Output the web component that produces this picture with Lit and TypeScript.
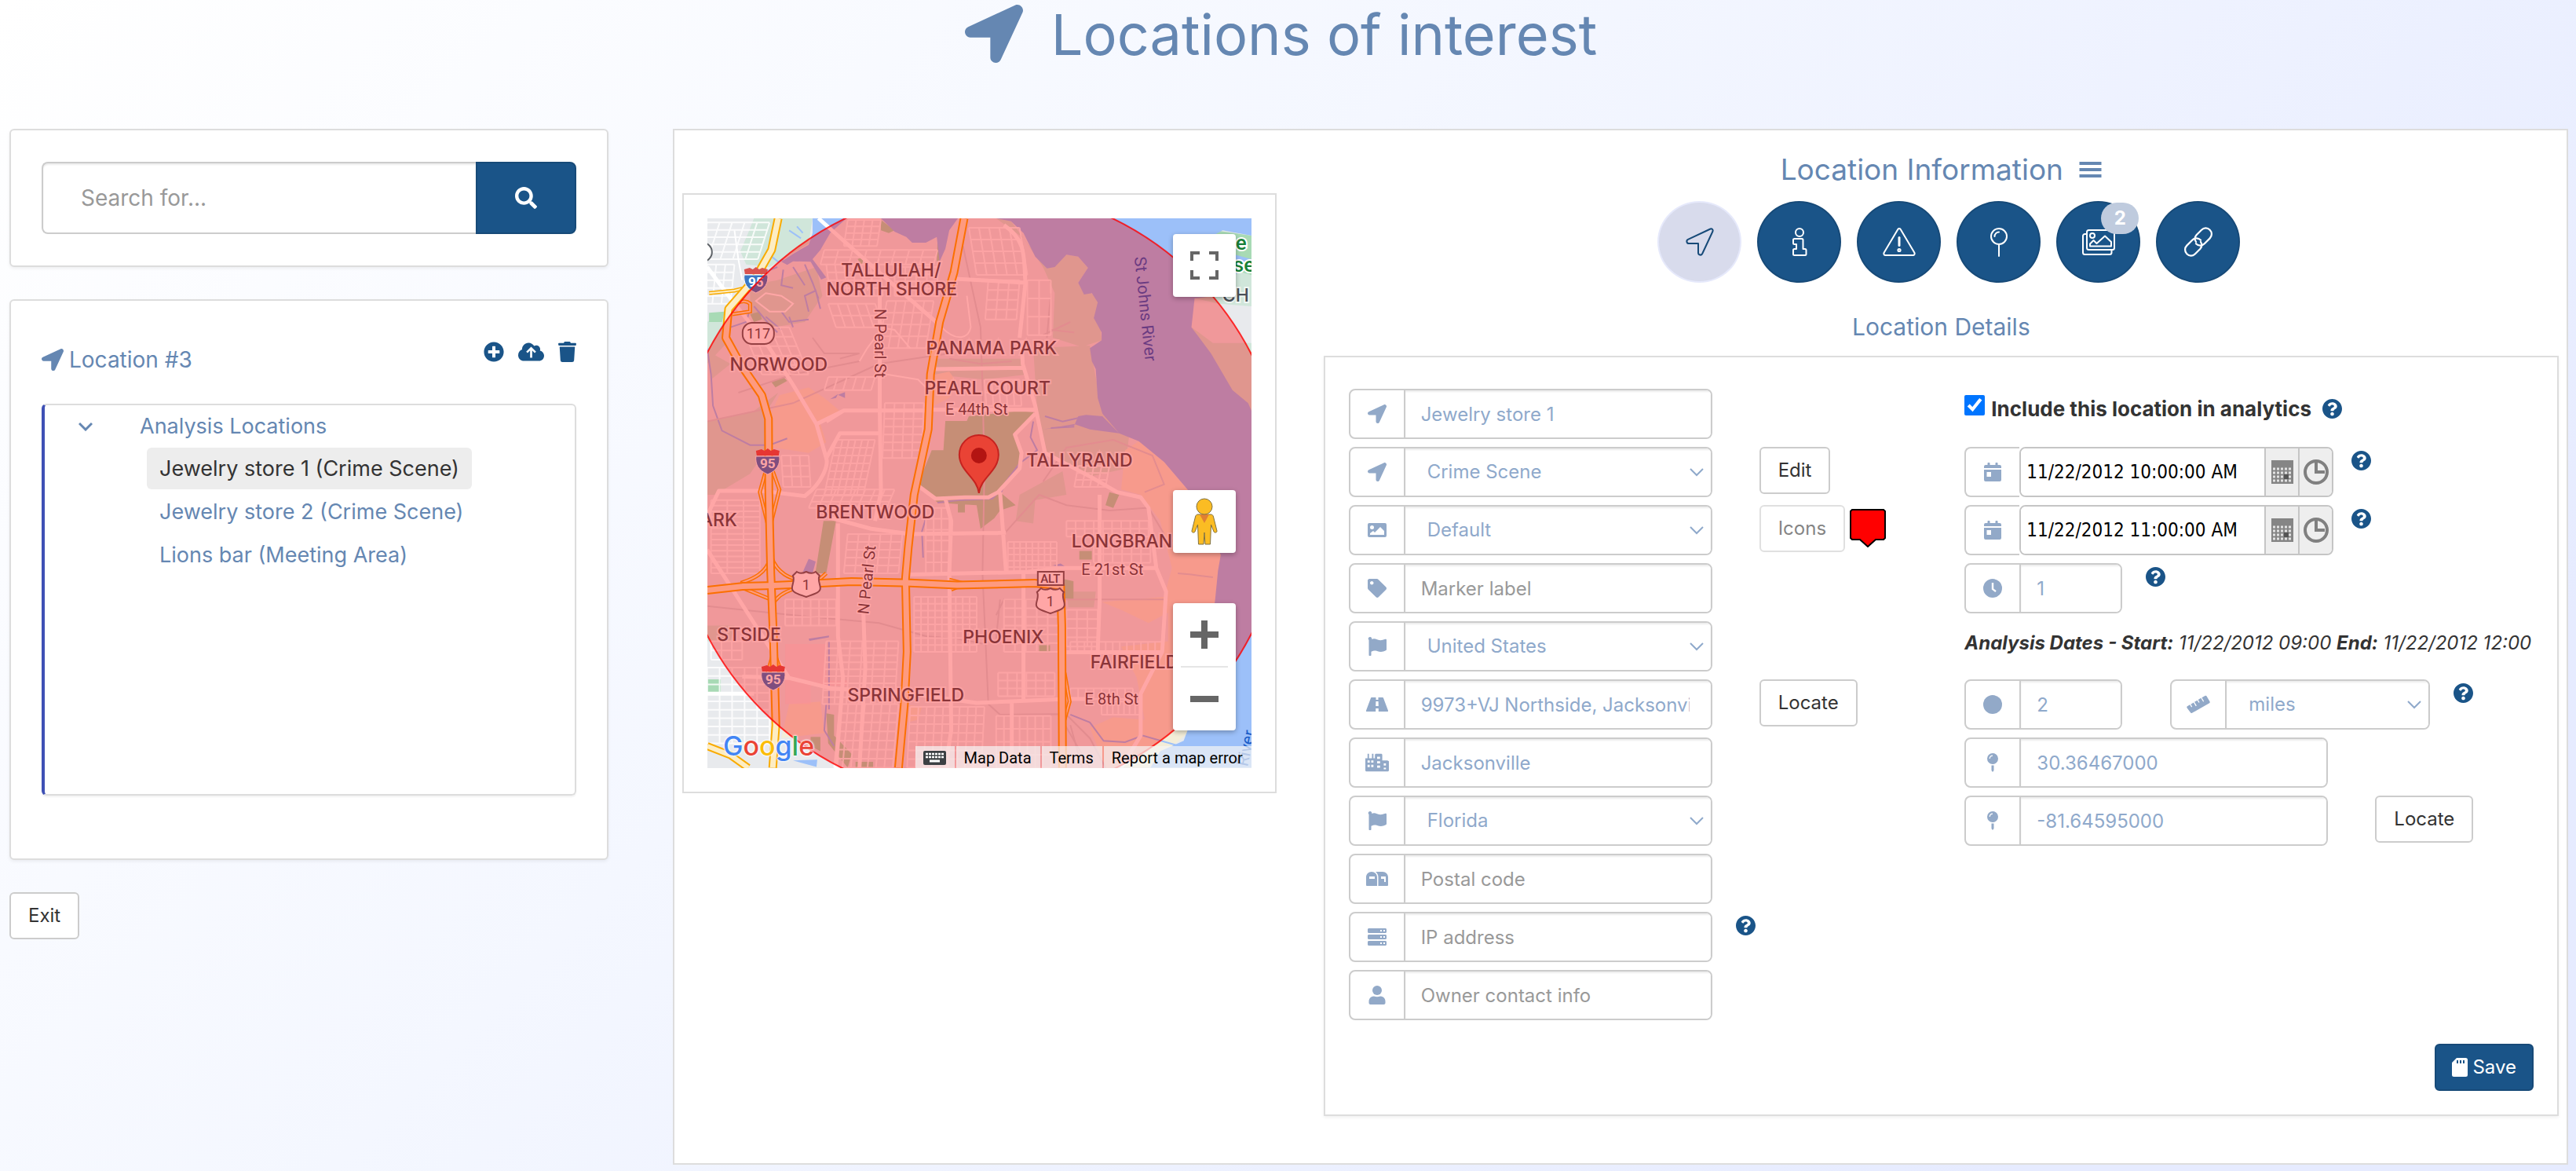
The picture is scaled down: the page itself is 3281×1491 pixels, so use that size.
import { LitElement, html, svg, css, nothing } from "lit";
import { customElement, property } from "lit/decorators.js";

/* ---------- icons ---------- */

const ARROW =
  "M444.52 3.52L28.74 195.42c-47.97 22.39-31.98 92.75 19.19 92.75h175.91v175.91c0 51.17 70.36 67.17 92.75 19.19l191.9-415.78c15.99-38.39-25.59-79.97-63.97-63.97z";

const icons: Record<string, { box: string; art: unknown }> = {
  arrow: { box: "0 0 512 512", art: svg`<path d=${ARROW} />` },
  search: {
    box: "0 0 512 512",
    art: svg`<path d="M505 442.7L405.3 343c-4.5-4.5-10.6-7-17-7H372c27.6-35.3 44-79.7 44-128C416 93.1 322.9 0 208 0S0 93.1 0 208s93.1 208 208 208c48.3 0 92.7-16.4 128-44v16.3c0 6.4 2.5 12.5 7 17l99.7 99.7c9.4 9.4 24.6 9.4 33.9 0l28.3-28.3c9.4-9.4 9.4-24.6.1-34zM208 336c-70.7 0-128-57.2-128-128 0-70.7 57.2-128 128-128 70.7 0 128 57.2 128 128 0 70.7-57.2 128-128 128z" />`,
  },
  plus: {
    box: "0 0 512 512",
    art: svg`<path d="M256 8C119 8 8 119 8 256s111 248 248 248 248-111 248-248S393 8 256 8zm144 276c0 6.600-5.400 12-12 12h-92v92c0 6.600-5.400 12-12 12h-56c-6.600 0-12-5.400-12-12v-92h-92c-6.600 0-12-5.400-12-12v-56c0-6.600 5.400-12 12-12h92v-92c0-6.600 5.400-12 12-12h56c6.600 0 12 5.400 12 12v92h92c6.600 0 12 5.400 12 12v56z" />`,
  },
  cloud: {
    box: "0 0 640 448",
    art: svg`<path fill-rule="evenodd" d="M537 195c5-11 7-23 7-35 0-53-43-96-96-96-20 0-38 6-53 16C367 32 315 0 256 0 168 0 96 72 96 160v8C40 188 0 241 0 304c0 79 65 144 144 144h368c71 0 128-57 128-128 0-62-44-114-103-125zM320 96L442 218 408 252 346 192V368H294V192L232 252 198 218Z" />`,
  },
  trash: {
    box: "0 0 448 512",
    art: svg`<path d="M432 32H312l-9.400-18.700A24 24 0 0 0 281 0H167a24 24 0 0 0-21.600 13.300L136 32H16A16 16 0 0 0 0 48v32a16 16 0 0 0 16 16h416a16 16 0 0 0 16-16V48a16 16 0 0 0-16-16zM53 467a48 48 0 0 0 48 45h246a48 48 0 0 0 48-45L416 128H32z" />`,
  },
  help: {
    box: "8 8 496 496",
    art: svg`<path d="M504 256c0 136.997-111.043 248-248 248S8 392.997 8 256C8 119.083 119.043 8 256 8s248 111.083 248 248zM262.655 90c-54.497 0-89.255 22.957-116.549 63.758-3.536 5.286-2.353 12.415 2.715 16.258l34.699 26.31c5.205 3.947 12.621 3.008 16.665-2.122 17.864-22.658 30.113-35.797 57.303-35.797 20.429 0 45.698 13.148 45.698 32.958 0 14.976-12.363 22.667-32.534 33.976C247.128 238.528 216 254.941 216 296v4c0 6.627 5.373 12 12 12h56c6.627 0 12-5.373 12-12v-1.333c0-28.462 83.186-29.647 83.186-106.667 0-58.002-60.165-102-116.531-102zM256 338c-25.365 0-46 20.635-46 46 0 25.364 20.635 46 46 46s46-20.636 46-46c0-25.365-20.635-46-46-46z" />`,
  },
  tag: {
    box: "0 0 512 512",
    art: svg`<path d="M0 252.118V48C0 21.490 21.490 0 48 0h204.118a48 48 0 0 1 33.941 14.059l211.882 211.882c18.745 18.745 18.745 49.137 0 67.882L293.823 497.941c-18.745 18.745-49.137 18.745-67.882 0L14.059 286.059A48 48 0 0 1 0 252.118zM112 64c-26.510 0-48 21.490-48 48s21.490 48 48 48 48-21.490 48-48-21.490-48-48-48z" />`,
  },
  image: {
    box: "0 0 24 24",
    art: svg`<path fill-rule="evenodd" d="M2 3h20a2 2 0 0 1 2 2v14a2 2 0 0 1-2 2H2a2 2 0 0 1-2-2V5a2 2 0 0 1 2-2zM5.500 6a2.500 2.500 0 1 0 0 5 2.500 2.500 0 0 0 0-5zM3 18h18v-5l-5-5-7 7-2-2-4 3z" />`,
  },
  flag: {
    box: "0 0 24 24",
    art: svg`<path d="M3 0a2.200 2.200 0 0 1 2.100 3C7 2.200 9 2 12 3.200c4 1.500 6 1.200 10.500-.4.800-.300 1.500.1 1.500 1v12c0 .8-.4 1.200-1 1.500-4 2-7 2-11 .700-2.500-.8-4.500-.6-7.500.7V23c0 .600-.4 1-1 1h-1c-.600 0-1-.4-1-1V3.900A2.200 2.200 0 0 1 3 0z" />`,
  },
  road: {
    box: "0 0 28 24",
    art: svg`<path fill-rule="evenodd" d="M7 3h5.500v3h3V3H21a1 1 0 0 1 1 .7l6 16c.3.700-.2 1.300-1 1.300H15.800v-4h-3.600v4H1c-.8 0-1.300-.600-1-1.300l6-16A1 1 0 0 1 7 3zM12.400 8l-.2 6h3.600l-.2-6z" />`,
  },
  city: {
    box: "0 0 32 24",
    art: svg`<path fill-rule="evenodd" d="M0 6h3V0h2v6h4V0h2v6h2V1l1-1h8l1 1v8h7l2 1v13l-1 1H1l-1-1zM3 9v3h3V9zm5 0v3h3V9zm8-5v3h4V4zm0 6v3h4v-3zM3 15v3h3v-3zm5 0v3h3v-3zm8 1v3h4v-3zm9-3v3h3v-3zm0 6v2h3v-2z" />`,
  },
  mailbox: {
    box: "0 0 28 24",
    art: svg`<path fill-rule="evenodd" d="M7 3c4 0 7 3 7 7v11H1a1 1 0 0 1-1-1V10c0-4 3-7 7-7zM4 9v3h7V9z" /><path fill-rule="evenodd" d="M12 3h9c4 0 7 3 7 7v10a1 1 0 0 1-1 1H15.500V10c0-3-1.500-5.500-3.500-7zM19 9v3h4v4h2V9z" />`,
  },
  server: {
    box: "0 0 24 24",
    art: svg`<path fill-rule="evenodd" d="M1.500 1h21c.800 0 1.500.7 1.500 1.500v3c0 .800-.7 1.500-1.500 1.500h-21C.7 7 0 6.300 0 5.500v-3C0 1.700.7 1 1.500 1zM16 3v2h2V3zm4 0v2h2V3zM1.500 9h21c.800 0 1.500.7 1.500 1.500v3c0 .800-.7 1.500-1.500 1.500h-21C.7 15 0 14.300 0 13.500v-3C0 9.700.7 9 1.500 9zM16 11v2h2v-2zm4 0v2h2v-2zM1.500 17h21c.800 0 1.500.7 1.500 1.500v3c0 .800-.7 1.500-1.500 1.500h-21C.7 23 0 22.300 0 21.500v-3c0-.8.7-1.500 1.500-1.500zM16 19v2h2v-2zm4 0v2h2v-2z" />`,
  },
  user: {
    box: "0 0 24 24",
    art: svg`<circle cx="12" cy="6" r="6" /><path d="M8 13.500c2.500 1 5.500 1 8 0 4 0 6.500 3 6.500 6.500v2c0 1-1 2-2 2h-17c-1 0-2-1-2-2v-2c0-3.500 2.500-6.500 6.500-6.500z" />`,
  },
  calendar: {
    box: "0 0 24 24",
    art: svg`<path fill-rule="evenodd" d="M1 7V5a2 2 0 0 1 2-2h2.500V1c0-.6.4-1 1-1h1c.6 0 1 .4 1 1v2h7V1c0-.6.4-1 1-1h1c.6 0 1 .4 1 1v2H21a2 2 0 0 1 2 2v2zM1 9h22v13a2 2 0 0 1-2 2H3a2 2 0 0 1-2-2zm3.500 3v6H10v-6z" />`,
  },
  clock: {
    box: "0 0 24 24",
    art: svg`<path fill-rule="evenodd" d="M12 0a12 12 0 1 1 0 24 12 12 0 0 1 0-24zM10.800 5v8.500l4.500 3.600 1.400-1.900-3.500-2.800V5z" />`,
  },
  circle: { box: "0 0 24 24", art: svg`<circle cx="12" cy="12" r="12" />` },
  ruler: {
    box: "0 0 32 24",
    art: svg`<path d="M1 14.500 4.500 12.300 6.500 15.700 7.700 15 5.700 11.600 9.500 9.300 12.500 14.300 13.700 13.600 10.700 8.600 14.500 6.300 16.500 9.700 17.700 9 15.700 5.600 19.500 3.300 22.500 8.300 23.700 7.600 20.700 2.600 25 .3c.9-.5 1.800-.3 2.300.5L31.500 8c.500.800.2 1.600-.5 2L7.500 23.500c-.8.500-1.700.3-2.200-.5L.500 16.500c-.4-.8-.2-1.500.5-2z" />`,
  },
  pin: {
    box: "0 0 24 24",
    art: svg`<path fill-rule="evenodd" d="M12 0a7 7 0 1 1 0 14 7 7 0 0 1 0-14zM12 2.500C9.500 2.500 7.600 4.400 7.600 6.900h1.200C8.800 5 10.200 3.700 12 3.700z" /><path d="M10.500 15.400h3V22L12 24l-1.500-2z" />`,
  },
  sd: {
    box: "0 0 20 24",
    art: svg`<path fill-rule="evenodd" d="M6 0h11.500A2.500 2.500 0 0 1 20 2.500v19a2.500 2.500 0 0 1-2.500 2.500h-15A2.500 2.500 0 0 1 0 21.500V6zM6 3v4h2V3zm4 0v4h2V3zm4 0v4h2V3z" />`,
  },
  bars: { box: "0 0 28 20", art: svg`<path d="M0 0h28v4H0zM0 8h28v4H0zM0 16h28v4H0z" />` },
};

const icon = (name: string, cls = "") =>
  svg`<svg class="icon ${cls}" viewBox=${icons[name].box} aria-hidden="true">${icons[name].art}</svg>`;

const outline: Record<string, unknown> = {
  arrow: svg`<path d="M31.500 1.500 3 14.800C.3 16.200 1.200 20 4.200 20H16v11.800c0 3 3.800 3.900 5.200 1.200L34.500 4.500c.8-2-1-3.800-3-3z" />`,
  info: svg`<circle cx="18" cy="6" r="5" /><path d="M11.500 14H21c1 0 1.500.500 1.500 1.500V27H25c1 0 1.500.5 1.500 1.500v5c0 1-.5 1.500-1.500 1.500H11.500c-1 0-1.500-.5-1.500-1.500v-5c0-1 .5-1.500 1.500-1.500H14v-6h-2.500c-1 0-1.500-.5-1.500-1.500v-4c0-1 .5-1.500 1.500-1.500z" />`,
  warning: svg`<path d="M16.300 2c.8-1.300 2.600-1.300 3.400 0l17.700 29.700c.8 1.500-.2 3.300-1.900 3.300H.5c-1.700 0-2.700-1.800-1.900-3.300z" /><path d="M18 12.500v10" stroke-width="3" /><circle cx="18" cy="28.500" r="1.600" />`,
  pin: svg`<circle cx="18" cy="11" r="10" /><path d="M18 21v15M12.500 11A5.500 5.500 0 0 1 18 5.500" />`,
  images: svg`<rect x="3" y="3" width="35" height="25" rx="2.500" /><path d="M2 8H1A2.500 2.500 0 0 0-2 10.500V31.500A2.500 2.500 0 0 0 .5 34H32a2.500 2.500 0 0 0 2.500-2.500V29" /><circle cx="10" cy="10" r="3" /><path d="M7 23.500v-3l4.500-4.500 4 4L26 10.500l8 7.500v5.500z" />`,
  link: svg`<g transform="translate(0 0) scale(1.5)" stroke-width="1.500"><path d="M10 13.500a5 5 0 0 0 7.200 0l4.600-4.600A5 5 0 0 0 14.700 1.800L10.500 6a5 5 0 0 0-.5 6M14 10.500a5 5 0 0 0-7.200 0l-4.600 4.600a5 5 0 0 0 7.100 7.100L13.500 18a5 5 0 0 0 .5-6" /></g>`,
};

/* ---------- map ---------- */

/* Block grid between two corners, sheared horizontally by \`lean\`. */
function blocks(x0: number, y0: number, x1: number, y1: number, nx: number, ny: number, lean = 0): string {
  let d = "";
  for (let i = 0; i <= nx; i++) {
    const x = x0 + ((x1 - x0) * i) / nx;
    d += `M${x} ${y0}L${x + lean} ${y1}`;
  }
  for (let j = 0; j <= ny; j++) {
    const t = j / ny;
    const y = y0 + (y1 - y0) * t;
    d += `M${x0 + lean * t} ${y}H${x1 + lean * t}`;
  }
  return d;
}

const streets = [
  blocks(440, 150, 525, 250, 4, 4, -10),
  blocks(380, 265, 670, 320, 8, 2, -10),
  blocks(385, 320, 520, 440, 6, 4, 10),
  blocks(560, 330, 670, 440, 4, 4),
  blocks(750, 180, 880, 360, 5, 4, 20),
  blocks(800, 380, 880, 530, 3, 4, -8),
  blocks(900, 380, 960, 590, 2, 3),
  blocks(540, 460, 660, 640, 5, 4, -20),
  blocks(170, 560, 290, 740, 5, 5, 50),
  blocks(390, 470, 510, 560, 5, 2, 20),
  blocks(390, 750, 510, 800, 5, 1, -10),
  blocks(535, 850, 635, 1060, 4, 7, -6),
  blocks(790, 760, 880, 860, 5, 2, 5),
  blocks(410, 990, 510, 1200, 6, 7, -30),
  blocks(270, 1050, 340, 1170, 3, 3, 5),
  blocks(1030, 1090, 1110, 1170, 4, 3, -10),
  blocks(90, 1220, 215, 1500, 3, 13),
  blocks(360, 1180, 560, 1250, 8, 3, -20),
  blocks(440, 1350, 580, 1500, 5, 5, -10),
  blocks(280, 1600, 410, 1700, 6, 3),
  blocks(610, 1590, 770, 1800, 9, 8),
  blocks(640, 1250, 700, 1500, 3, 6),
  blocks(850, 1380, 975, 1500, 8, 5),
  blocks(1000, 1300, 1210, 1360, 9, 2),
  blocks(1070, 1360, 1215, 1460, 6, 3),
  blocks(840, 1600, 980, 1800, 5, 6),
  blocks(1000, 1640, 1080, 1780, 3, 4),
  blocks(1010, 1762, 1245, 1800, 13, 1),
  blocks(1010, 1940, 1170, 1980, 8, 1),
  blocks(385, 1760, 570, 2000, 6, 9, -10),
  blocks(420, 2000, 570, 2243, 7, 7, -15),
  blocks(600, 2010, 790, 2243, 9, 7, -8),
  blocks(820, 2045, 960, 2243, 7, 4),
  blocks(825, 1880, 970, 1970, 6, 3),
  blocks(90, 1760, 170, 1830, 3, 2),
  blocks(1090, 1990, 1190, 2040, 7, 1),
  blocks(80, 1860, 240, 2150, 5, 9),
  blocks(80, 160, 240, 300, 5, 5, -30),
  blocks(80, 320, 150, 470, 3, 5, -10),
].join("");

const arterials =
  "M365 144L520 350 670 545M522 440V870L525 1190 510 1300M80 1280L110 1185H220L330 1205C380 1150 390 1080 385 1060L420 965H520M80 330L140 450 240 640 300 780 360 930 385 1060M360 930L430 878H640M430 878L385 920M650 875H920M660 720L890 715M885 610L888 700 920 860 945 1040 1060 1130 1130 1190 1190 1210 1210 1250 1230 1480 1255 1570 1245 1800 1190 1960 1190 2120 1140 2243M715 375L895 390 880 600M840 170C900 230 890 300 895 390M920 890L868 970 885 1040 880 1100 825 1190 800 1210H740L665 1215 615 1160M400 1290L500 1330 600 1350 845 1345M690 1215L705 1300 700 1500 705 2100 690 2243M830 1190L845 1490M600 1505L900 1495 980 1480 1230 1480M415 1310V1740L428 1900 410 2243M480 1650L485 1860 470 2243M80 1410L200 1690 290 1900 400 1940 600 1960 770 1995 1000 1980H1060M170 1895L290 1900M1000 1802H1245M1085 1200V1600L1080 1800M80 1960H200M890 1500V1980M860 1990V2243";

const highways = [
  "M262 144L245 265 205 370 135 490 128 600 165 700 220 820 237 910 238 1190 243 1500 250 1750 256 2080 248 2243",
  "M738 144L712 350 675 540 652 740 646 950 610 1200 595 1400 588 1520 592 1800 585 2000 570 2243",
  "M80 1565L170 1550 250 1547 450 1532 600 1537 720 1545 920 1538 985 1548 988 1700 990 2243",
];

const ramps =
  "M230 1110L215 1190 238 1330M248 1110L265 1180 245 1300M243 1440C230 1500 200 1520 170 1535V1555L243 1600M245 1440C260 1500 290 1520 330 1532M330 1550C290 1560 260 1580 248 1620M128 540C140 460 175 450 190 470V500L145 510M85 430L150 420 205 400M370 1520L385 1500M700 1525L740 1540 705 1562M925 1530L985 1500M985 1540L960 1560M995 1880L1008 1990 995 2060M250 1800L235 1880M252 1800L270 1880";

const labels: Array<[string, number, number, string]> = [
  ["TALLULAH/", 234, 74, "middle"],
  ["NORTH SHORE", 235, 98, "middle"],
  ["NORWOOD", 91, 194, "middle"],
  ["PANAMA PARK", 362, 173, "middle"],
  ["PEARL COURT", 357, 224, "middle"],
  ["TALLYRAND", 474, 316, "middle"],
  ["BRENTWOOD", 214, 382, "middle"],
  ["ARK", 38, 392, "end"],
  ["LONGBRANCH", 464, 419, "start"],
  ["STSIDE", 94, 538, "end"],
  ["PHOENIX", 377, 541, "middle"],
  ["FAIRFIELD", 488, 573, "start"],
  ["SPRINGFIELD", 253, 615, "middle"],
];

const roadNames: Array<[string, number, number, number]> = [
  ["E 44th St", 343, 250, 0],
  ["E 21st St", 516, 454, 0],
  ["E 8th St", 515, 619, 0],
  ["N Pearl St", 213, 159, 90],
  ["N Pearl St", 210, 461, -84],
];

const interstate = (x: number, y: number) => svg`
  <g transform="translate(${x} ${y})">
    <path d="M-15 -6H15C16 4 12 12 0 17-12 12-16 4-15-6z" fill="#3b78c3" stroke="#fff" />
    <path d="M-14 -7L-15-13-8-15-4-13 0-16 4-13 8-15 15-13 14-7z" fill="#d9534f" />
    <text class="shield" y="9" fill="#fff">95</text>
  </g>`;

const usRoute = (x: number, y: number) => svg`
  <g transform="translate(${x} ${y})">
    <path d="M-12-16C-8-13-4-14 0-16 4-14 8-13 12-16L17-11C14-6 18 0 18 5 18 11 8 13 0 16-8 13-18 11-18 5-18 0-14-6-17-11z" fill="#fff" stroke="#5f6368" stroke-width="2" />
    <text class="shield plain" y="7">1</text>
  </g>`;

@customElement("location-map")
export class LocationMap extends LitElement {
  static styles = css`
    :host {
      display: block;
      position: relative;
      height: 700px;
      overflow: hidden;
      font-family: Roboto, "Liberation Sans", sans-serif;
    }
    .canvas {
      display: block;
      width: 100%;
      height: 100%;
    }
    .terrain path {
      vector-effect: non-scaling-stroke;
    }
    .area {
      font-family: Inter, Roboto, sans-serif;
      font-size: 23px;
      font-weight: 500;
      fill: #4a5057;
      stroke: #ffffff;
      stroke-width: 4px;
      stroke-opacity: 0.7;
      paint-order: stroke;
    }
    .road {
      font-size: 20px;
      fill: #4a5057;
      stroke: #ffffff;
      stroke-width: 3px;
      paint-order: stroke;
      text-anchor: middle;
    }
    .river {
      font-size: 21px;
      fill: #1a5cc8;
      text-anchor: middle;
    }
    .park {
      font-size: 26px;
      font-weight: 500;
      fill: #188038;
      stroke: #ffffff;
      stroke-width: 4px;
      paint-order: stroke;
    }
    .shield {
      font-size: 17px;
      font-weight: 700;
      text-anchor: middle;
    }
    .plain {
      font-size: 18px;
      font-weight: 400;
      fill: #4a5057;
    }
    .plate {
      font-size: 15px;
      font-weight: 500;
    }
    .control {
      position: absolute;
      right: 20px;
      width: 80px;
      height: 80px;
      padding: 0;
      border: 0;
      border-radius: 4px;
      background: #ffffff;
      box-shadow: 0 2px 6px rgba(0, 0, 0, 0.3);
      display: grid;
      place-items: center;
    }
    .full {
      top: 20px;
    }
    .street {
      top: 346px;
    }
    .zoom {
      top: 490px;
      height: 162px;
      grid-template-rows: 1fr 2px 1fr;
    }
    .zoom button {
      border: 0;
      padding: 0;
      width: 80px;
      height: 80px;
      background: none;
      display: grid;
      place-items: center;
    }
    .rule {
      width: 60px;
      height: 2px;
      background: #e6e6e6;
    }
    .logo {
      position: absolute;
      left: 20px;
      bottom: 8px;
      font: 500 34px/40px Inter, sans-serif;
      text-decoration: none;
      text-shadow: 0 0 3px #ffffff, 0 0 3px #ffffff, 0 0 2px #ffffff;
    }
    .b {
      color: #4285f4;
    }
    .r {
      color: #ea4335;
    }
    .y {
      color: #fbbc05;
    }
    .g {
      color: #34a853;
    }
    .legal {
      position: absolute;
      right: 0;
      bottom: 0;
      display: flex;
      gap: 2px;
      height: 28px;
    }
    .legal > * {
      display: flex;
      align-items: center;
      padding: 2px 11px 0 10px;
      border: 0;
      background: rgba(245, 245, 245, 0.7);
      color: #000000;
      font: 400 20px/26px Roboto, "Liberation Sans", sans-serif;
      text-decoration: none;
    }
  `;

  render() {
    return html`
      <svg class="canvas" viewBox="0 0 693 700" preserveAspectRatio="xMidYMid slice" role="img" aria-label="Map of Jacksonville">
        <rect width="693" height="700" fill="#e8eaed" />
        <g class="terrain" transform="translate(-40 -48) scale(0.4975 0.3333)" fill="none">
          <g fill="#d0e6da">
            <path d="M200 144H350L340 240 240 330 180 320 165 270 185 200zM190 400L260 380 360 330 375 440 330 540 250 560 190 500zM80 540L130 500V620L80 700zM80 920L200 880 262 810 225 900 235 1020 190 1120 100 1200H80zM80 650L140 700 90 760zM820 144L858 155 900 240 950 335 1000 283 1030 290 1055 333 1030 390 1080 450 1090 610 1040 635 965 600 970 430 940 330 890 220zM915 640L1060 630 1092 890 1160 980 1150 1100 1060 1130 950 1040 925 880zM660 680H890L900 740 790 760 660 740zM1320 560L1375 620H1474V1000zM1330 450L1390 360 1474 340V480L1390 470zM880 1200L990 1110 1000 1200 920 1220 915 1310 870 1300zM1000 1570H1075L1070 1630H1005zM80 1700V1760H140L150 1700z" />
          </g>
          <g fill="#f3edd8">
            <path d="M265 820L340 790 380 830 420 880 370 930 385 1000 340 1040 250 1020 240 900zM665 740L700 730 720 770 700 830 660 860zM1185 995L1250 1075 1310 1180 1400 1420 1380 1610 1340 1800 1310 2110 1210 2243H1100L1060 2090 1120 2050 1200 2060 1180 1900 1140 1780 1260 1760 1260 1650 1210 1690 1140 1640 1090 1610 1250 1590 1270 1480 1240 1300 1190 1200 1140 1180 1150 1030zM290 2000L370 1990 380 2110 270 2130zM580 2000L630 2010 620 2060 590 2070z" />
          </g>
          <path fill="#f8dfe4" d="M280 1770H385V1910H440V1930H345V2000H280z" opacity="0.6" />
          <g fill="#a8dab5">
            <path d="M690 918H745L750 900 880 880 918 885 870 970 885 1040 880 1100 830 1190 870 1240 830 1260 815 1290 780 1330 770 1240 720 1235 670 1230 620 1160 655 1030H685zM378 1300H410L385 1500H357zM985 1520L1018 1530V1600L990 1595zM1033 1415H1065V1448H1033zM1110 1190L1135 1200 1120 1250 1100 1240zM245 770L275 750 285 765 255 790zM525 150L560 190 545 200 525 190zM465 300L480 290 490 310 475 320zM930 1775H958V1800H930zM82 1905H115V1960H82zM85 505L125 500 118 540H85zM385 2035L405 2040V2120L450 2190 440 2243 390 2150zM345 2125H370V2180L345 2160zM460 2220H505V2243H460zM722 1235H740V1268H722zM1380 190L1474 210V360L1400 330zM190 510L215 500 220 530 200 540zM670 225L678 225V300L668 310z" />
          </g>
          <g fill="#9cc0f9">
            <path d="M350 144H437L395 200 370 265 350 300 385 370 372 378 345 310 300 308 285 322 270 310 300 280 340 245 350 200zM525 144H722L700 190 690 260 675 310 668 215 640 237H605L590 215 560 195zM820 144L858 155 890 200 920 290 950 335 970 330 1000 283 1030 290 1055 333 1030 390 1045 435 1065 430 1080 465 1070 525 1090 580V610L1060 640 1065 690 1075 720 1080 830 1092 890 1135 965 1185 995 1250 1075 1310 1180 1395 1430 1388 1490 1380 1610 1340 1800 1310 2100 1300 2140 1240 2180 1215 2243H1474V880L1465 850 1425 800 1370 660 1320 560 1328 450 1380 440 1400 380 1474 330V300L1400 270 1350 230 1400 190 1474 210V144zM1092 900L1135 965 1060 950 1020 930 940 950 1020 935 1030 900 1050 895zM395 835L415 815 410 830zM415 818L433 808V830zM340 1445L358 1455 350 1500 325 1495zM340 1750L392 1738V1745L342 1758zM965 1470L985 1463 1000 1478zM300 2215L362 2212 360 2240z" />
            <path fill="none" stroke="#9cc0f9" stroke-width="2" d="M215 330L235 345 260 330M245 290L262 310 275 300M290 190L320 220M310 175L325 200M275 340L270 400 300 410M300 330L330 400M330 320L350 390 365 450M370 490L358 420 330 440 340 500M200 480L240 550 260 580M230 520L270 570M290 520L300 560M190 490L180 540 140 560M270 500L290 540 340 530M80 640L90 740 95 860 118 955 190 1010 240 1010 285 985M945 900L990 920 1050 900M960 945L1020 940M915 920L908 980 925 1030 880 1080 845 1150 830 1200M640 1290L630 1340 633 1440M392 1760V2020M670 1230L730 1220 810 1215 870 1120M385 2000L380 2100 405 2160M1010 2040L1060 2070 1095 2140 1150 2145 1195 2120 1290 2160" />
          </g>
          <path stroke="#d4d7dc" stroke-width="2" d="M735 250L780 560 785 780 790 1110M80 920L300 850 520 700 700 660M350 600L380 660H470L420 680M950 600L960 430M160 810L300 740 470 690M790 1110L785 1500 800 2000 830 2040 980 2038 1060 2243M80 1625L300 1660 520 1690 640 1740 720 1750 790 1770M940 590L1010 540M960 570L1020 580M830 1600L820 1750M840 1350L930 1200 1000 1240 1110 1260 1210 1250 1250 1350M820 1660L840 1600H1250M1285 1500L1320 1505 1375 1515M1000 2040L1060 2130 1100 2243M1010 2080L1040 2243M700 680L780 700 860 690M940 1150L1000 1020 1120 990 1220 1050 1250 1160 1200 1190" />
          <path stroke="#ffffff" stroke-width="2" d=${streets} opacity="0.85" />
          <path stroke="#ffffff" stroke-width="2" d="M230 430L270 440 300 470 280 500 240 500 205 460zM520 560L560 570 600 640M680 560C720 620 750 600 755 560L745 440M540 740L620 760 640 790M520 300L490 420M150 190L160 300 170 380M470 690L490 640 510 600" />
          <path stroke="#ffffff" stroke-width="5" stroke-linejoin="round" d=${arterials} />
          <path stroke="#f9ab00" stroke-width="5" d=${ramps} />
          <path stroke="#fdedc3" stroke-width="2" d=${ramps} />
          ${highways.map((d) => svg`<path stroke="#f9ab00" stroke-width="11" stroke-linejoin="round" d=${d} />`)}
          ${highways.map((d) => svg`<path stroke="#fdedc3" stroke-width="7" stroke-linejoin="round" d=${d} />`)}
          <path stroke="#f9ab00" stroke-width="10" d="M80 2160L140 2195 185 2243" />
          <path stroke="#fdedc3" stroke-width="6" d="M80 2160L140 2195 185 2243" />
        </g>

        ${labels.map(([name, x, y, anchor]) => svg`<text class="area" x=${x} y=${y} text-anchor=${anchor}>${name}</text>`)}
        ${roadNames.map(([name, x, y, turn]) => svg`<text class="road" transform="translate(${x} ${y}) rotate(${turn})">${name}</text>`)}
        <text class="river" transform="translate(551 116) rotate(84)">St Johns River</text>
        <text class="river" transform="translate(693 676) rotate(-78)">River</text>
        <text class="park" x="673" y="40">e</text>
        <text class="park" x="670" y="68">se</text>
        <text class="area" x="656" y="106">CH</text>

        ${interstate(62, 78)} ${interstate(77, 309)} ${interstate(84, 584)}
        <rect x="45" y="133" width="40" height="27" rx="12" fill="#fff" stroke="#5f6368" stroke-width="2" />
        <text class="shield plain" x="65" y="153">117</text>
        <circle cx="-6" cy="43" r="12" fill="#fff" stroke="#5f6368" stroke-width="2" />
        ${usRoute(126, 466)} ${usRoute(437, 487)}
        <rect x="421" y="450" width="33" height="17" fill="#fff" stroke="#5f6368" stroke-width="2" />
        <text class="shield plain plate" x="437" y="464">ALT</text>

        <circle cx="346" cy="351" r="390" fill="#ff0000" fill-opacity="0.35" stroke="#ff0000" stroke-opacity="0.8" stroke-width="2" />

        <path d="M346 350C344 330 321 322 321 301a25 25 0 0 1 50 0C371 322 348 330 346 350z" fill="#ea4335" stroke="#c5221f" stroke-width="2" />
        <circle cx="346" cy="302" r="10" fill="#b31412" />
      </svg>

      <button class="control full" aria-label="Toggle fullscreen view">
        <svg width="36" height="36" viewBox="0 0 36 36" fill="#666666">
          <path d="M0 0h12v4H4v8H0zM24 0h12v12h-4V4h-8zM0 24h4v8h8v4H0zM32 24h4v12H24v-4h8z" />
        </svg>
      </button>
      <button class="control street" aria-label="Street View">
        <svg width="34" height="60" viewBox="0 0 34 60" fill="#fbbc23" stroke="#80713f" stroke-width="1">
          <path d="M9 21h16c2 0 3 1 3.500 3L33 42c.5 2-3 3-4 1l-3.500-9-1 25H18l-1-15-1 15H9.500l-1-25L5 43c-1 2-4.500 1-4-1l4.500-18C6 22 7 21 9 21z" />
          <path d="M11 21h12l-6 11z" fill="#e07f33" stroke="none" />
          <circle cx="17" cy="11" r="10" />
        </svg>
      </button>
      <div class="control zoom">
        <button aria-label="Zoom in">
          <svg width="36" height="36" viewBox="0 0 36 36" fill="#666666"><path d="M14 0h8v14h14v8H22v14h-8V22H0v-8h14z" /></svg>
        </button>
        <span class="rule"></span>
        <button aria-label="Zoom out">
          <svg width="36" height="36" viewBox="0 0 36 36" fill="#666666"><path d="M0 14h36v8H0z" /></svg>
        </button>
      </div>
      <a class="logo" href="#google"><span class="b">G</span><span class="r">o</span><span class="y">o</span><span class="b">g</span><span class="g">l</span><span class="r">e</span></a>
      <div class="legal">
        <button aria-label="Keyboard shortcuts">
          <svg width="29" height="18" viewBox="0 0 29 18">
            <rect width="29" height="18" rx="2" fill="#3c4043" />
            <path d="M3 4h23M3 8h23" stroke="#fff" stroke-width="2.500" stroke-dasharray="3 1" />
            <path d="M8 13h13" stroke="#fff" stroke-width="3" />
          </svg>
        </button>
        <button>Map Data</button>
        <a href="#terms">Terms</a>
        <a href="#report">Report a map error</a>
      </div>
    `;
  }
}

/* ---------- page ---------- */

@customElement("app-root")
export class AppRoot extends LitElement {
  @property({ type: String }) selected = "Jewelry store 1 (Crime Scene)";

  static styles = css`
    :host {
      --blue: #6587b2;
      --soft: #8fa9cb;
      --navy: #1a5488;
      --navy-edge: #174a78;
      --line: #dddddd;
      --field: #cccccc;
      display: block;
      box-sizing: border-box;
      min-height: 100vh;
      padding: 0 10px 8px 12px;
      background: linear-gradient(135deg, #ffffff 0%, #f4f7ff 40%, #e6ebff 85%);
      color: #333333;
      font: 400 24px/32px Inter, "Open Sans", sans-serif;
    }
    *,
    *::before {
      box-sizing: border-box;
    }
    button,
    input,
    select {
      font: inherit;
      margin: 0;
    }
    h1,
    h2,
    h3,
    p,
    ul {
      margin: 0;
      padding: 0;
      font-weight: 400;
    }
    .icon {
      display: block;
      width: 24px;
      height: 24px;
      flex: none;
      fill: currentColor;
    }
    .title {
      display: flex;
      justify-content: center;
      gap: 36px;
      height: 164px;
      padding-right: 20px;
      color: var(--blue);
      font-size: 72px;
      font-weight: 400;
      line-height: 88px;
    }
    .title .icon {
      width: 74px;
      height: 74px;
      margin-top: 6px;
    }
    .page {
      display: grid;
      grid-template-columns: 763fr 2414fr;
      gap: 82px;
      align-items: start;
    }
    .side {
      display: grid;
      gap: 41px;
      justify-items: start;
    }
    .card {
      width: 100%;
      padding: 40px 39px;
      border: 2px solid var(--line);
      border-radius: 6px;
      background: #ffffff;
      box-shadow: 0 2px 4px rgba(0, 0, 0, 0.06);
    }
    .search {
      display: flex;
      height: 92px;
    }
    .search input {
      flex: 1;
      min-width: 0;
      padding: 0 48px;
      border: 2px solid var(--field);
      border-right: 0;
      border-radius: 8px 0 0 8px;
      box-shadow: inset 0 2px 2px rgba(0, 0, 0, 0.08);
      font-size: 28px;
      outline: 0;
    }
    ::placeholder {
      color: #999999;
      opacity: 1;
    }
    .search button {
      display: grid;
      place-items: center;
      width: 128px;
      border: 2px solid var(--navy-edge);
      border-radius: 0 8px 8px 0;
      background: var(--navy);
      color: #ffffff;
    }
    .search .icon {
      width: 28px;
      height: 28px;
    }
    .tree-card {
      padding-bottom: 80px;
    }
    .tree-head {
      display: flex;
      align-items: flex-start;
      height: 91px;
      padding-top: 12px;
      color: var(--blue);
    }
    .tree-head h2 {
      flex: 1;
      display: flex;
      align-items: center;
      gap: 7px;
      padding-top: 5px;
      font-size: 28px;
      line-height: 36px;
    }
    .tree-head h2 .icon {
      width: 28px;
      height: 28px;
    }
    .tools {
      display: flex;
      gap: 18px;
    }
    .tools button {
      padding: 0;
      border: 0;
      background: none;
      color: var(--navy);
    }
    .tools .icon {
      width: 26px;
      height: 26px;
    }
    .tools .wide {
      width: 33px;
    }
    .tools .slim {
      width: 23px;
    }
    .tree {
      height: 499px;
      border: 2px solid var(--line);
      border-left: 4px solid #3f51b5;
      border-radius: 6px;
      color: var(--blue);
      font-size: 27px;
      box-shadow: 0 2px 2px rgba(0, 0, 0, 0.05);
    }
    .tree ul {
      list-style: none;
    }
    .branch {
      display: flex;
      align-items: center;
      gap: 60px;
      height: 54px;
      padding-left: 43px;
    }
    .branch svg,
    .pick svg {
      display: block;
      fill: none;
      stroke: currentColor;
    }
    .leaves {
      display: grid;
      justify-items: start;
      gap: 2px;
      padding-left: 130px;
    }
    .leaf {
      height: 53px;
      padding: 0 16px;
      border: 0;
      border-radius: 6px;
      background: none;
      color: inherit;
    }
    .leaf.on {
      background: #ededed;
      color: #333333;
    }
    .btn {
      flex: none;
      height: 60px;
      padding: 0 22px;
      border: 2px solid var(--field);
      border-radius: 6px;
      background: #ffffff;
      color: #333333;
    }
    .btn[disabled] {
      opacity: 0.6;
    }
    .panel {
      display: grid;
      grid-template-columns: 757fr 1574fr;
      gap: 60px;
      align-items: start;
      padding: 0 10px 60px;
      border: 2px solid var(--line);
      background: #ffffff;
    }
    .map-card {
      margin-top: 80px;
      padding: 30px;
      border: 2px solid var(--line);
    }
    .info {
      text-align: center;
      color: var(--blue);
    }
    .info h2 {
      display: flex;
      justify-content: center;
      align-items: center;
      gap: 20px;
      padding: 30px 0 20px;
      font-size: 37px;
      line-height: 40px;
    }
    .info h2 .icon {
      width: 29px;
      height: 20px;
    }
    .tabs {
      display: flex;
      justify-content: center;
      gap: 20px;
      padding-left: 20px;
    }
    .tab {
      position: relative;
      display: grid;
      place-items: center;
      width: 107px;
      height: 104px;
      padding: 0;
      border: 2px solid var(--navy-edge);
      border-radius: 50%;
      background: var(--navy);
      color: #ffffff;
    }
    .tab.on {
      border-color: #e6e9fb;
      background: #d8dbec;
      color: #174a78;
    }
    .tab svg {
      width: 36px;
      height: 36px;
      overflow: visible;
      fill: none;
      stroke: currentColor;
      stroke-width: 2px;
      stroke-linejoin: round;
      stroke-linecap: round;
    }
    .badge {
      position: absolute;
      top: 0;
      right: 0;
      width: 48px;
      border-radius: 20px;
      background: #bfcbde;
      color: #ffffff;
      font-size: 24px;
      font-weight: 700;
      line-height: 40px;
    }
    .info h3 {
      padding: 40px 0 21px;
      font-size: 30px;
      line-height: 32px;
    }
    .details {
      padding: 40px 30px 30px;
      border: 2px solid var(--line);
      box-shadow: 0 2px 4px rgba(0, 0, 0, 0.06);
      color: #333333;
      text-align: left;
    }
    .columns {
      display: grid;
      grid-template-columns: 785fr 725fr;
    }
    .column {
      display: grid;
      align-content: start;
      gap: 10px;
      min-width: 0;
    }
    .row {
      display: flex;
      align-items: flex-start;
      height: 64px;
    }
    .field {
      flex: none;
      display: flex;
      width: 463px;
      height: 64px;
      border: 2px solid var(--field);
      border-radius: 8px;
      color: var(--soft);
      overflow: hidden;
    }
    .small {
      width: 201px;
    }
    .unit {
      width: 331px;
      margin-left: 61px;
    }
    .addon {
      flex: none;
      display: grid;
      place-items: center;
      width: 70px;
      border-right: 2px solid var(--field);
      color: #92a9c8;
    }
    .addon .broad {
      width: 30px;
    }
    .field input,
    .field select {
      flex: 1;
      min-width: 0;
      width: 100%;
      height: 60px;
      padding: 0 27px 0 20px;
      border: 0;
      outline: 0;
      background: #ffffff;
      color: inherit;
      appearance: none;
      box-shadow: inset 0 2px 2px rgba(0, 0, 0, 0.08);
    }
    .field select {
      padding: 0 40px 0 28px;
    }
    .pick {
      flex: 1;
      min-width: 0;
      display: grid;
      align-items: center;
    }
    .pick > * {
      grid-area: 1 / 1;
    }
    .pick svg {
      justify-self: end;
      margin-right: 9px;
      pointer-events: none;
    }
    .after {
      margin-left: 60px;
    }
    .help {
      flex: none;
      margin: 5px 0 0 30px;
      padding: 0;
      border: 0;
      background: none;
      color: var(--navy);
    }
    .help .icon {
      width: 25px;
      height: 25px;
    }
    .near {
      margin-left: 23px;
    }
    .close {
      margin: 13px 0 0 14px;
    }
    .marker {
      display: block;
      margin: 4px 0 0 5px;
    }
    .check {
      display: flex;
      align-items: flex-start;
      padding-top: 8px;
      font-size: 26px;
      font-weight: 700;
      line-height: 36px;
    }
    .check input {
      width: 26px;
      height: 26px;
      margin: 0 8px 0 0;
      accent-color: #0075ff;
    }
    .stamp {
      flex: none;
      display: flex;
      width: 470px;
      height: 64px;
    }
    .stamp .addon {
      border: 2px solid var(--field);
      border-right: 0;
      border-radius: 8px 0 0 8px;
    }
    .picker {
      flex: 1;
      min-width: 0;
      display: flex;
      border: 2px solid #c5c5c5;
      border-radius: 8px;
      overflow: hidden;
    }
    .picker input {
      flex: 1;
      min-width: 0;
      padding: 0 7px;
      border: 0;
      outline: 0;
      color: #000000;
      font-family: "DejaVu Sans Condensed", "DejaVu Sans", sans-serif;
    }
    .picker button {
      display: grid;
      place-items: center;
      width: 43px;
      padding: 0;
      border: 0;
      border-left: 2px solid #c5c5c5;
      background: #eeeeee;
    }
    .dates {
      height: 64px;
      padding-top: 12px;
      font-style: italic;
      white-space: nowrap;
    }
    .actions {
      display: flex;
      justify-content: flex-end;
      margin-top: 30px;
    }
    .save {
      display: flex;
      align-items: center;
      gap: 6px;
      padding: 0 20px;
      border-color: var(--navy-edge);
      background: var(--navy);
      color: #ffffff;
    }
    .save .icon {
      width: 20px;
    }
  `;

  private chevron(thick = 2) {
    return svg`<svg width="18" height="12" viewBox="0 0 18 12" aria-hidden="true"><path d="M1 2l8 8 8-8" stroke-width=${thick} /></svg>`;
  }

  private text(glyph: string, label: string, value: string, size = "") {
    return html`<label class="field ${size}">
      <span class="addon">${icon(glyph, ["city", "road", "mailbox"].includes(glyph) ? "broad" : "")}</span>
      <input type="text" aria-label=${label} placeholder=${label} .value=${value} />
    </label>`;
  }

  private choice(glyph: string, label: string, value: string, size = "") {
    return html`<label class="field ${size}">
      <span class="addon">${icon(glyph, glyph === "ruler" ? "broad" : "")}</span>
      <span class="pick">
        <select aria-label=${label}>
          <option>${value}</option>
        </select>
        ${this.chevron()}
      </span>
    </label>`;
  }

  private help(cls = "") {
    return html`<button type="button" class="help ${cls}" aria-label="Help">${icon("help")}</button>`;
  }

  private stamp(label: string, value: string) {
    return html`<div class="row">
      <div class="stamp">
        <span class="addon">${icon("calendar")}</span>
        <span class="picker">
          <input type="text" aria-label=${label} .value=${value} />
          <button type="button" aria-label="Open calendar">
            <svg width="28" height="30" viewBox="0 0 28 30">
              <rect width="28" height="30" fill="#858585" />
              <path d="M2 11h24M2 16h24M2 21h24M2 26h24" stroke="#e2e2e2" stroke-width="3" stroke-dasharray="3 2" />
              <path d="M16 18h6v6h-6z" fill="#555" />
            </svg>
          </button>
          <button type="button" aria-label="Open time list">
            <svg width="32" height="32" viewBox="0 0 32 32" fill="none" stroke="#808080" stroke-width="4">
              <circle cx="16" cy="16" r="14" />
              <path d="M16 3v13h11" />
            </svg>
          </button>
        </span>
      </div>
      ${this.help("near")}
    </div>`;
  }

  private tab(name: string, label: string, on = false, badge = "") {
    return html`<button type="button" class="tab ${on ? "on" : ""}" aria-label=${label}>
      <svg viewBox="0 0 36 36" aria-hidden="true">${outline[name]}</svg>
      ${badge ? html`<span class="badge">${badge}</span>` : nothing}
    </button>`;
  }

  render() {
    const places = ["Jewelry store 1 (Crime Scene)", "Jewelry store 2 (Crime Scene)", "Lions bar (Meeting Area)"];
    return html`
      <h1 class="title">${icon("arrow")}<span>Locations of interest</span></h1>
      <div class="page">
        <aside class="side">
          <form class="card search-card">
            <div class="search">
              <input type="text" aria-label="Search for..." placeholder="Search for..." />
              <button type="button" aria-label="Search">${icon("search")}</button>
            </div>
          </form>
          <section class="card tree-card">
            <div class="tree-head">
              <h2>${icon("arrow")}<span>Location #3</span></h2>
              <div class="tools">
                <button aria-label="Add">${icon("plus")}</button>
                <button aria-label="Upload">${icon("cloud", "wide")}</button>
                <button aria-label="Delete">${icon("trash", "slim")}</button>
              </div>
            </div>
            <div class="tree">
              <div class="branch">${this.chevron(3)}<span>Analysis Locations</span></div>
              <ul class="leaves">
                ${places.map(
                  (name) => html`<li>
                    <button class="leaf ${name === this.selected ? "on" : ""}" @click=${() => (this.selected = name)}>${name}</button>
                  </li>`
                )}
              </ul>
            </div>
          </section>
          <button class="btn">Exit</button>
        </aside>

        <main class="panel">
          <div class="map-card"><location-map></location-map></div>
          <section class="info">
            <h2><span>Location Information</span>${icon("bars")}</h2>
            <nav class="tabs">
              ${this.tab("arrow", "Location", true)} ${this.tab("info", "Information")} ${this.tab("warning", "Alerts")}
              ${this.tab("pin", "Pins")} ${this.tab("images", "Images", false, "2")} ${this.tab("link", "Links")}
            </nav>
            <h3>Location Details</h3>
            <form class="details">
              <div class="columns">
                <div class="column">
                  <div class="row">${this.text("arrow", "Location name", "Jewelry store 1")}</div>
                  <div class="row">
                    ${this.choice("arrow", "Location type", "Crime Scene")}
                    <button type="button" class="btn after">Edit</button>
                  </div>
                  <div class="row">
                    ${this.choice("image", "Marker icon", "Default")}
                    <button type="button" class="btn after" disabled>Icons</button>
                    <svg class="marker" width="48" height="50" viewBox="0 0 48 50" aria-hidden="true">
                      <path d="M4 2H44L46 4V38L44 40H34L24 49 14 40H4L2 38V4z" fill="#ff0000" stroke="#000000" stroke-width="2" />
                    </svg>
                  </div>
                  <div class="row">${this.text("tag", "Marker label", "")}</div>
                  <div class="row">${this.choice("flag", "Country", "United States")}</div>
                  <div class="row">
                    ${this.text("road", "Address", "9973+VJ Northside, Jacksonville")}
                    <button type="button" class="btn after">Locate</button>
                  </div>
                  <div class="row">${this.text("city", "City", "Jacksonville")}</div>
                  <div class="row">${this.choice("flag", "State", "Florida")}</div>
                  <div class="row">${this.text("mailbox", "Postal code", "")}</div>
                  <div class="row">${this.text("server", "IP address", "")}${this.help()}</div>
                  <div class="row">${this.text("user", "Owner contact info", "")}</div>
                </div>
                <div class="column">
                  <div class="row">
                    <label class="check"><input type="checkbox" checked />Include this location in analytics</label>
                    ${this.help("close")}
                  </div>
                  ${this.stamp("Start date", "11/22/2012 10:00:00 AM")} ${this.stamp("End date", "11/22/2012 11:00:00 AM")}
                  <div class="row">${this.text("clock", "Hours", "1", "small")}${this.help()}</div>
                  <p class="dates"><b>Analysis Dates - Start:</b> 11/22/2012 09:00 <b>End:</b> 11/22/2012 12:00</p>
                  <div class="row">
                    ${this.text("circle", "Radius", "2", "small")} ${this.choice("ruler", "Radius unit", "miles", "unit")}
                    ${this.help()}
                  </div>
                  <div class="row">${this.text("pin", "Latitude", "30.36467000")}</div>
                  <div class="row">
                    ${this.text("pin", "Longitude", "-81.64595000")}
                    <button type="button" class="btn after">Locate</button>
                  </div>
                </div>
              </div>
              <div class="actions">
                <button type="button" class="btn save">${icon("sd")}<span>Save</span></button>
              </div>
            </form>
          </section>
        </main>
      </div>
    `;
  }
}
